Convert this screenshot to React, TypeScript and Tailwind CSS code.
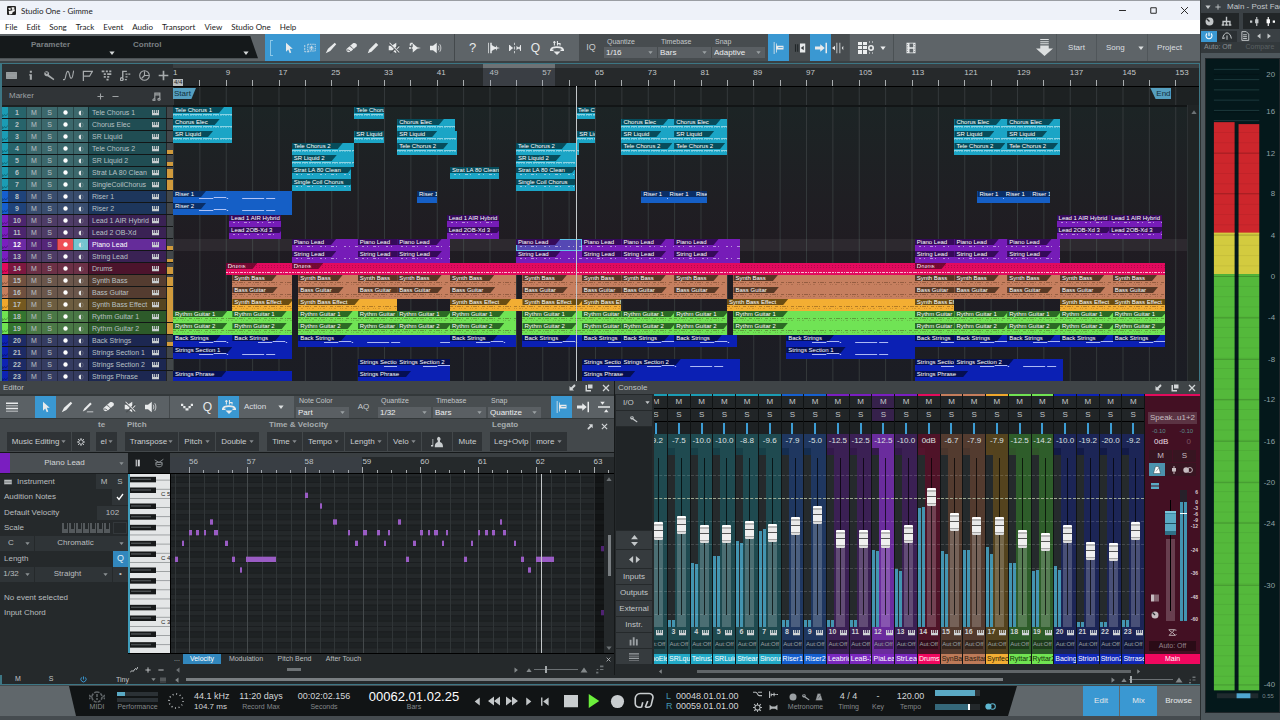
import { ReactNode, useState } from "react";
import clsx from "clsx";

// horizontal zoom of the arrangement and of the piano roll
const BAR = 6.594;
const ROLL_BAR = 57.8;
const SEMI = 16 / 3;

type Hue = "teal" | "blue" | "violet" | "red" | "brown" | "amber" | "green" | "navy";

type Clip = [start: number, end: number];

type Track = {
  n: number;
  name: string;
  clip?: string;
  hue: Hue;
  level?: number;
  notes: "strum" | "sparse" | "dark" | "drums" | "line" | "none";
  clips: Clip[];
};

const hues: Record<
  Hue,
  { strip: string; num: string; btn: string; name: string; body: string; tab: string; desk: string; label: string }
> = {
  teal: {
    strip: "bg-[#1b9cb4]", num: "bg-[#27646b]", btn: "bg-[#3c686c]", name: "bg-[#204d53]",
    body: "bg-[#1ba5c6]", tab: "bg-[#074c5b]", desk: "bg-[#1f4a50]", label: "bg-[#22a9c6] text-white",
  },
  blue: {
    strip: "bg-[#155fcf]", num: "bg-[#1f437a]", btn: "bg-[#394d6e]", name: "bg-[#1d365c]",
    body: "bg-[#155fc6]", tab: "bg-[#0a2e66]", desk: "bg-[#1f3760]", label: "bg-[#155fcf] text-white",
  },
  violet: {
    strip: "bg-[#7a1ec0]", num: "bg-[#4c256f]", btn: "bg-[#4e3c66]", name: "bg-[#3a2254]",
    body: "bg-[#761cb8]", tab: "bg-[#350a5a]", desk: "bg-[#3b2054]", label: "bg-[#7a28bd] text-white",
  },
  red: {
    strip: "bg-[#e30b5c]", num: "bg-[#7c1740]", btn: "bg-[#6b3046]", name: "bg-[#4c142c]",
    body: "bg-[#e20a5e]", tab: "bg-[#720932]", desk: "bg-[#4f1328]", label: "bg-[#f0085f] text-white",
  },
  brown: {
    strip: "bg-[#c57d5c]", num: "bg-[#70503f]", btn: "bg-[#6a564b]", name: "bg-[#543c30]",
    body: "bg-[#c67f5f]", tab: "bg-[#573825]", desk: "bg-[#533b2f]", label: "bg-[#bd7a58] text-[#2a1a10]",
  },
  amber: {
    strip: "bg-[#f0a72c]", num: "bg-[#75591f]", btn: "bg-[#6d5d40]", name: "bg-[#564521]",
    body: "bg-[#f3ae33]", tab: "bg-[#6b4d12]", desk: "bg-[#54431e]", label: "bg-[#f3ae33] text-[#2a1c05]",
  },
  green: {
    strip: "bg-[#70e352]", num: "bg-[#34752f]", btn: "bg-[#4a7846]", name: "bg-[#2d5a2a]",
    body: "bg-[#70e355]", tab: "bg-[#2b6a24]", desk: "bg-[#2e5d2a]", label: "bg-[#70e352] text-[#123008]",
  },
  navy: {
    strip: "bg-[#0d22b4]", num: "bg-[#1d2b66]", btn: "bg-[#353c61]", name: "bg-[#1c2751]",
    body: "bg-[#0b20b4]", tab: "bg-[#050f52]", desk: "bg-[#1c2556]", label: "bg-[#1128b8] text-white",
  },
};

const chorusPair: Clip[] = [[69, 77], [77, 85], [119.5, 127.5], [127.5, 135.5]];
const leads: Clip[] = [[19, 29], [29, 35], [35, 43], [53, 63], [63, 69], [69, 77], [77, 87], [113.5, 119.5], [119.5, 127.5], [127.5, 135.5]];
const airs: Clip[] = [[9.5, 17.4], [42.5, 50.4], [135, 143], [143, 151]];
const ending: Clip[] = [[113.5, 119.5], [119.5, 127.5], [127.5, 135.5], [135.5, 143.5], [143.5, 151.5]];
const groove: Clip[] = [[10, 19], [20, 29], [29, 35], [35, 43], [43, 53], [54, 63], [63, 69], [69, 77], [77, 85], [86, 113.5], ...ending];

const tracks: Track[] = [
  { n: 1, name: "Tele Chorus 1", hue: "teal", notes: "strum", clips: [[1, 10], [28.5, 33], [62.1, 65]] },
  { n: 2, name: "Chorus Elec", hue: "teal", notes: "strum", clips: [[1, 10], [35, 43.7], ...chorusPair] },
  { n: 3, name: "SR Liquid", hue: "teal", notes: "strum", clips: [[1, 10], [28.5, 33], [35, 44], [62.3, 65], ...chorusPair] },
  { n: 4, name: "Tele Chorus 2", hue: "teal", level: 4, notes: "strum", clips: [[19, 28.5], [35, 44], [53, 62.5], ...chorusPair] },
  { n: 5, name: "SR Liquid 2", hue: "teal", level: 4, notes: "strum", clips: [[19, 28.5], [53, 62.1]] },
  { n: 6, name: "Strat LA 80 Clean", hue: "teal", level: 9, notes: "sparse", clips: [[19, 28], [43, 50.4], [53, 62]] },
  { n: 7, name: "SingleCoilChorus", clip: "Single Coil Chorus", hue: "teal", level: 10, notes: "sparse", clips: [[19, 28], [53, 62]] },
  { n: 8, name: "Riser 1", hue: "blue", notes: "line", clips: [[1, 19], [38, 41], [72, 76], [76, 80], [80, 82], [123, 127], [127, 131], [131, 134]] },
  { n: 9, name: "Riser 2", hue: "blue", notes: "line", clips: [[1, 19]] },
  { n: 10, name: "Lead 1 AIR Hybrid", hue: "violet", notes: "sparse", clips: airs },
  { n: 11, name: "Lead 2 OB-Xd", clip: "Lead 2OB-Xd 3", hue: "violet", notes: "sparse", clips: airs },
  { n: 12, name: "Piano Lead", hue: "violet", level: 4, notes: "sparse", clips: leads },
  { n: 13, name: "String Lead", hue: "violet", level: 3, notes: "sparse", clips: leads },
  { n: 14, name: "Drums", hue: "red", level: 7, notes: "drums", clips: [[9, 19], [19, 113.5], [113.5, 151.5]] },
  { n: 15, name: "Synth Bass", hue: "brown", level: 9, notes: "dark", clips: groove },
  { n: 16, name: "Bass Guitar", hue: "brown", level: 11, notes: "dark", clips: groove },
  { n: 17, name: "Synth Bass Effect", hue: "amber", level: 12, notes: "dark", clips: [[10, 19], [20, 35], [43, 54], [54, 63], [63, 69], [85, 113.5], [113.5, 119.5], [135.5, 143.5], [143.5, 151.5]] },
  { n: 18, name: "Rythm Guitar 1", hue: "green", level: 12, notes: "dark", clips: [[1, 10], ...groove] },
  { n: 19, name: "Rythm Guitar 2", hue: "green", level: 11, notes: "dark", clips: [[1, 10], ...groove] },
  { n: 20, name: "Back Strings", hue: "navy", level: 4, notes: "line", clips: [[1, 10], [10, 19], [20, 43], [43, 53], [54, 63], [63, 69], [69, 77], [77, 86.5], [94, 113.5], ...ending] },
  { n: 21, name: "Strings Section 1", hue: "navy", notes: "line", clips: [[1, 19], [94, 113.5]] },
  { n: 22, name: "Strings Section 2", hue: "navy", notes: "line", clips: [[29, 35], [35, 43], [63, 69], [69, 87], [113.5, 119.5], [119.5, 136]] },
  { n: 23, name: "Strings Phrase", hue: "navy", notes: "none", clips: [[1, 19], [29, 43], [63, 87], [113.5, 136]] },
];

// number, name, hue, dB, fader travel, left meter, right meter
const channels: [number, string, Hue, string, number, number, number][] = [
  [2, "ChoEle", "teal", "-9.2", 87, 0, 0],
  [3, "SRLqui", "teal", "-7.5", 93, 7, 7],
  [4, "Telrus2", "teal", "-10.0", 84, 64, 63],
  [5, "SRLuid", "teal", "-10.0", 84, 71, 71],
  [6, "Strlean", "teal", "-8.8", 88, 86, 84],
  [7, "Sinorus", "teal", "-9.6", 85, 96, 98],
  [8, "Riser1", "blue", "-7.9", 92, 7, 7],
  [9, "Riser2", "blue", "-5.0", 103, 7, 7],
  [10, "Leabric", "violet", "-12.5", 79, 7, 7],
  [11, "LeaB-X", "violet", "-12.5", 79, 7, 7],
  [12, "PiaLea", "violet", "-12.5", 79, 77, 76],
  [13, "StrLead", "violet", "-10.0", 84, 58, 56],
  [14, "Drums", "red", "0dB", 121, 119, 120],
  [15, "SynBas", "brown", "-6.7", 96, 76, 73],
  [16, "Basitar", "brown", "-7.9", 92, 77, 77],
  [17, "Synfec", "amber", "-7.9", 92, 80, 73],
  [18, "Ryttar1", "green", "-12.5", 79, 64, 64],
  [19, "Ryttar2", "green", "-14.2", 76, 56, 57],
  [20, "Bacing", "navy", "-10.0", 84, 61, 57],
  [21, "Strion1", "navy", "-19.2", 67, 5, 5],
  [22, "Strion2", "navy", "-20.0", 66, 5, 5],
  [23, "Strrase", "navy", "-9.2", 87, 7, 7],
];

// piano roll notes: x, width, semitones below the top key
const rollNotes: [number, number, number][] = [
  [4, 3, 16], [11, 2, 13], [18, 3, 11], [25, 3, 11], [33, 2, 11], [39, 3, 9], [43, 4, 11], [54, 3, 13], [61, 3, 16], [69, 2, 18],
  [75, 30, 16], [134, 3, 4], [149, 2, 6], [162, 4, 9], [177, 2, 11], [184, 3, 13], [192, 4, 11], [206, 3, 11], [213, 2, 13],
  [217, 2, 11], [227, 3, 9], [235, 3, 16], [242, 3, 13], [249, 3, 11], [257, 2, 11], [263, 4, 11], [271, 2, 13], [275, 2, 11],
  [293, 3, 16], [300, 2, 13], [307, 2, 11], [314, 3, 11], [321, 3, 11], [329, 2, 9], [332, 3, 11], [343, 2, 13], [350, 3, 16],
  [357, 3, 18], [365, 18, 16],
];
const blackKeys = [1, 3, 6, 8, 10, 13, 15, 18, 20, 22, 25, 27, 30, 32];

const icons: Record<string, ReactNode> = {
  pointer: <path d="M4 1v12l3-3 2 5 2-1-2-5h4z" fill="currentColor" />,
  range: (
    <>
      <rect x="5" y="3" width="10" height="9" fill="none" stroke="currentColor" strokeDasharray="2 1" />
      <path d="M1 4v9h7M8 6l4 4M12 6l-4 4M10 5v6M7 8h6" fill="none" stroke="currentColor" strokeDasharray="3 1" />
    </>
  ),
  brush: <path d="M1 15l3-6 9-8 2 2-8 9zM4 9l3 3" fill="currentColor" />,
  line: <path d="M1 15l2-5 9-9 3 3-9 9z" fill="currentColor" />,
  pencilLine: <path d="M1 14l2-4 8-8 2 2-8 8zM6 15h9v-1H7z" fill="currentColor" />,
  eraser: (
    <>
      <path d="M1 9l8-7c3-2 7 1 5 4l-8 7c-3 2-7-1-5-4z" fill="currentColor" />
      <path d="M5 6c2 0 4 2 5 4M1 11c2-1 4 0 5 2" fill="none" stroke="#3d4245" />
    </>
  ),
  mute: (
    <>
      <path d="M1 5h4l6-4v14l-6-4H1z" fill="currentColor" />
      <path d="M1 1l14 14M15 4L3 15" stroke="#4b5053" strokeWidth="2" />
      <path d="M2 1l13 13M15 6l-3 3" stroke="currentColor" strokeWidth="1.4" />
    </>
  ),
  bend: (
    <>
      <path d="M5 2l6 5 5 1-5 1-6 5z" fill="currentColor" />
      <path d="M0 8h7M2 2h3M2 2v3" stroke="currentColor" strokeWidth="2" strokeDasharray="3 1" />
    </>
  ),
  speaker: (
    <>
      <path d="M0 5h4l5-4v14l-5-4H0z" fill="currentColor" />
      <path d="M11 5c1 2 1 4 0 6M13 3c2 3 2 7 0 10" fill="none" stroke="currentColor" />
    </>
  ),
  transient: <path d="M0 1h1v14H0zM3 1h2v3l3 2 3 1V5h1v2l4 1-4 1v2h-1V9l-3 1-3 2v3H3z" fill="currentColor" />,
  gate: <path d="M0 4h1l3 3 2 1-2 1-3 3H0zM7 1h1v3H7zm0 5h1v4H7zm0 6h1v3H7zM10 5l2 2h2l1-3h1v8h-1l-1-3h-2l-2 2z" fill="currentColor" />,
  stretch: (
    <>
      <path d="M4 12h8l-4 4z" fill="currentColor" />
      <path d="M1 10c1-4 13-4 14 0M0 10.500h4M12 10.500h4" fill="none" stroke="currentColor" strokeWidth="1.800" />
      <path d="M5 0v5M3.500 1.500h3M8.500 0v5M8.500 3h3v2" fill="none" stroke="currentColor" strokeWidth="1.200" />
    </>
  ),
  snap: <path d="M1 0h1v16H1zM4 2h1v12H4zM5 5h9v5H5zM7 7v1h6V7z" fill="currentColor" fillRule="evenodd" />,
  loopIn: (
    <>
      <path d="M8 2h7v12H8z" fill="currentColor" />
      <path d="M13 5v6L9 8z" fill="#3a3f42" />
      <path d="M2 3v10M5 3v10" stroke="#1f2426" strokeWidth="1.5" />
    </>
  ),
  autoscroll: <path d="M0 6h7V3l6 5-6 5v-3H0zM14 1h2v14h-2z" fill="currentColor" />,
  cursor: <path d="M0 8l4-3v6zM6 1h1v14H6zM10 1h1v14h-1zM15 5v6l-2-3z" fill="currentColor" />,
  grid: (
    <>
      <path d="M0 2h4v3H0zM5 2h4v3H5zM0 6h4v3H0zM5 6h4v3H5zM0 10h4v4H0zM5 10h4v4H5z" fill="currentColor" />
      <circle cx="13" cy="8" r="2.2" fill="none" stroke="currentColor" strokeWidth="1.6" />
      <path d="M11 2h1M14 2h1M11 13h1M14 13h1" stroke="currentColor" />
    </>
  ),
  film: <path d="M2 1h12v14H2zM6 2v5h5V2zM6 9v5h5V9zM3 3v1h1V3zM3 6v1h1V6zM3 9v1h1V9zM3 12v1h1v-1zM12 3v1h1V3zM12 6v1h1V6zM12 9v1h1V9zM12 12v1h1v-1z" fill="currentColor" fillRule="evenodd" />,
  drop: <path d="M4 0h8v1H4zM4 2h8v1H4zM4 4h8v1H4zM4 6h8v3h4l-8 7-8-7h4z" fill="currentColor" />,
  block: <path d="M0 3h16v10H0zM1 5h14M1 7h14M1 9h14M1 11h14" fill="currentColor" stroke="#3a3f42" strokeWidth=".3" />,
  info: <path d="M7 1h3v3H7zM6 6h4v8H7V8H6z" fill="currentColor" />,
  wrench: <path d="M1 3c3-3 8 0 6 4l8 6-1 2-9-6C2 10-1 7 1 3l3 3 2-2z" fill="currentColor" />,
  automation: <path d="M0 14h2C4 14 4 2 7 2s2 10 5 10 2-9 4-11" fill="none" stroke="currentColor" strokeWidth="1.6" />,
  flag: <path d="M2 16V2h13l-4 7H3" fill="none" stroke="currentColor" strokeWidth="1.8" />,
  tempo: <path d="M1 2h4M7 2h3M12 2h3M4 6h3M9 6h6M4 10h3M9 10h3M8 14h3" stroke="currentColor" strokeWidth="2.4" />,
  size: <path d="M9 1h6v3H9zM9 7h6v2H9zM3 7h3v2H3zM2 12h4v3H2z" fill="currentColor" />,
  chord: <path d="M4 1v10M4 2h6M4 12a2 2 0 1 1-3 0 2 2 0 0 1 3 0M8 6h3M12 6h3M8 10h3M7 14h3" fill="none" stroke="currentColor" strokeWidth="2" />,
  clock: <path d="M8 1a7 7 0 1 0 0 14A7 7 0 0 0 8 1zM8 2v6h6M8 8l-4 4" fill="none" stroke="currentColor" strokeWidth="1.6" />,
  plus: <path d="M8 1v14M1 8h14" stroke="currentColor" strokeWidth="2.4" />,
  minus: <path d="M1 8h14" stroke="currentColor" strokeWidth="2.4" />,
  notes: <path d="M5 13V2h9v10M5 5h9M5 13a2 1.6 0 1 1-3 0 2 1.6 0 0 1 3 0M14 12a2 1.6 0 1 1-3 0 2 1.6 0 0 1 3 0" fill="none" stroke="currentColor" strokeWidth="2" />,
  keys: <path d="M0 2h3v7h2V2h2v7h2V2h2v7h2V2h3v12H0z" fill="currentColor" />,
  menu: <path d="M0 2h16v2H0zM0 6h16v1H0zM0 9h16v2H0zM0 13h16v1H0z" fill="currentColor" />,
  wave: <path d="M0 5h3M3 8h3M6 11h4M10 8h3M13 5h3" stroke="currentColor" strokeWidth="3" />,
  gear: <path d="M8 3.5a4.500 4.500 0 1 0 0 9 4.500 4.500 0 0 0 0-9zM8 0v4M8 12v4M0 8h4M12 8h4M2 2l3 3M11 11l3 3M14 2l-3 3M5 11l-3 3" fill="none" stroke="currentColor" strokeWidth="1.8" />,
  dock: <path d="M14 1l1 3-6 6 3 3H3V4l3 3 6-6z" fill="currentColor" />,
  undock: <path d="M2 15l-1-3 6-6-3-3h9v9l-3-3-6 6z" fill="currentColor" />,
  windows: <path d="M1 2h3v10h8v3H1zM6 1h9v8H6z" fill="currentColor" />,
  close: <path d="M2 2l12 12M14 2L2 14" stroke="currentColor" strokeWidth="2.600" />,
  upDown: <path d="M8 0l5 6H3zM8 16l5-6H3z" fill="currentColor" />,
  leftRight: <path d="M0 8l6-5v10zM16 8l-6-5v10z" fill="currentColor" />,
  bars: <path d="M1 6h3v9H1zM6 2h3v13H6zM11 5h3v10h-3z" fill="currentColor" />,
  mono: <path d="M0 1h7v14H0zM9 1h2v14H9zM12 1h1v14h-1zM15 1h1v14h-1z" fill="currentColor" />,
  split: <path d="M0 7h16v2H0zM3 1h6L6 5zM8 15h6l-3-4z" fill="currentColor" />,
  power: <path d="M8 1v7M4 3a6 6 0 1 0 8 0" fill="none" stroke="currentColor" strokeWidth="2.2" />,
  figure: <path d="M10 1a3 3 0 0 1 2 5v2c3 1 4 3 4 7H5c0-4 1-6 4-7V6a3 3 0 0 1 1-5zM0 14v-2h2V4h1v10z" fill="currentColor" />,
  zigzag: <path d="M0 13l4-4 2 2 5-6 2 2 3-5" fill="none" stroke="currentColor" strokeWidth="2" />,
  knob: (
    <>
      <circle cx="8" cy="8" r="7" fill="currentColor" />
      <path d="M8 8l-5-5" stroke="#2a2e30" strokeWidth="2.500" />
    </>
  ),
  routing: <path d="M8 1v7M3 13V8h10v5M1 13h4M11 13h4M6 13h4M8 8v5" stroke="currentColor" strokeWidth="2" fill="none" />,
  faderDot: <path d="M0 6h4v4H0zM11 0h2v16h-2zM9 4h6v7H9z" fill="currentColor" />,
  dotFader: <path d="M12 6h4v4h-4zM3 0h2v16H3zM1 4h6v7H1z" fill="currentColor" />,
  fader: <path d="M7 0h2v16H7zM4 4h8v7H4z" fill="currentColor" />,
  bypass: <path d="M1 12c2-12 12-12 14 0M8 14V7M1 12l4-1" fill="none" stroke="currentColor" strokeWidth="1.6" />,
  doc: <path d="M3 1h7l4 4v10H3zM5 6h6M5 9h6M5 12h6" fill="none" stroke="currentColor" strokeWidth="1.500" />,
  link: (
    <>
      <circle cx="5" cy="8" r="4.500" fill="currentColor" />
      <circle cx="11" cy="8" r="4" fill="none" stroke="currentColor" strokeWidth="1.500" />
    </>
  ),
  metronome: <path d="M5 1h6l4 14H1zM6 11l6-8" fill="currentColor" stroke="#111" strokeWidth=".7" />,
  fade: <path d="M0 4h5c3 0 3 6 6 6h5M9 4h7" fill="none" stroke="currentColor" strokeWidth="2" />,
  punch: <path d="M1 2v12M4 6v5M5 8h7M9 5v6M13 8h3" stroke="currentColor" strokeWidth="2" />,
  squeeze: <path d="M1 3l4 3h6l4-3v10l-4-3H5l-4 3z" fill="currentColor" />,
  circle: <circle cx="8" cy="8" r="7" fill="currentColor" />,
  midi: <path d="M8 3a5 5 0 1 0 0 10A5 5 0 0 0 8 3zM0 6l2 2-2 2M16 6l-2 2 2 2M8 5v6" fill="none" stroke="currentColor" strokeWidth="1.600" strokeDasharray="3 1" />,
  half: (
    <>
      <circle cx="8" cy="8" r="6" fill="none" stroke="currentColor" opacity=".5" />
      <path d="M8 2a6 6 0 0 0 0 12z" fill="currentColor" />
    </>
  ),
  loop: <path d="M6 13H4a3 3 0 0 1-3-3V6a4 4 0 0 1 4-4h7a3 3 0 0 1 3 4l-1 4a3 3 0 0 1-3 3H9M9 13l2-5M6 13l1-4" fill="none" stroke="currentColor" strokeWidth="1.300" />,
  rewind: <path d="M8 2v12L0 8zM16 2v12L8 8z" fill="currentColor" />,
  forward: <path d="M0 2l8 6-8 6zM8 2l8 6-8 6z" fill="currentColor" />,
  toStart: <path d="M3 2h2v12H3zM14 2v12L6 8z" fill="currentColor" />,
  left: <path d="M12 1v14L3 8z" fill="currentColor" />,
  right: <path d="M4 1v14l9-7z" fill="currentColor" />,
  play: <path d="M2 0v16l12-8z" fill="currentColor" />,
  up: <path d="M1 13h14L8 3z" fill="currentColor" />,
  down: <path d="M1 4h14l-7 9z" fill="currentColor" />,
  stop: <path d="M0 1h16v14H0z" fill="currentColor" />,
  lane: <path d="M1 6v7M2 11c3 2 3-7 6-3s4 1 7-4" fill="none" stroke="currentColor" strokeWidth="1.600" />,
  drumkit: <path d="M1 3l7 4 7-5M3 7h10v5c-2 3-8 3-10 0zM3 9c2 2 8 2 10 0" fill="none" stroke="currentColor" strokeWidth="1.500" />,
  key: <path d="M3 1h3v14H3zM7 1h5v14H7z" fill="currentColor" stroke="#1a1d1f" strokeWidth=".8" />,
  stack: <path d="M0 2h16v5H0zM0 9h16v5H0z" fill="currentColor" />,
  sigma: <path d="M1 3h10l-3 5 5 5H2l5-5-5-4M11 3l4 1M13 13l2-2" fill="none" stroke="currentColor" strokeWidth="1.600" />,
  keyboard: <path d="M0 3h16v10H0zM1 8h14" fill="currentColor" stroke="#2a2e30" />,
};

function Icon({ name, className = "size-3" }: { name: string; className?: string }) {
  return (
    <svg viewBox="0 0 16 16" aria-hidden="true" className={clsx("shrink-0", className)}>
      {icons[name]}
    </svg>
  );
}

function Tool({ icon, label, on, className = "w-[21px]" }: { icon: string; label: string; on?: boolean; className?: string }) {
  return (
    <button
      type="button"
      aria-label={label}
      className={clsx("flex h-full shrink-0 items-center justify-center text-[#e8eaeb]", on && "bg-[#3a98d2]", className)}
    >
      <Icon name={icon} className={icon === "stretch" ? "size-[14px]" : "size-3"} />
    </button>
  );
}

function Picker({ label, options, className = "w-[53px]" }: { label: string; options: string[]; className?: string }) {
  return (
    <label className={clsx("flex shrink-0 flex-col justify-between text-[7px] leading-[9px] text-[#c3c7c9]", className)}>
      <span className="pl-[3px]">{label}</span>
      <span className="relative flex h-[11px] items-center bg-[#5a5f63]">
        <select className="h-full w-full appearance-none bg-transparent pl-[2px] text-[8px] leading-[10px] text-[#eceeef]">
          {options.map((o) => (
            <option key={o}>{o}</option>
          ))}
        </select>
        <Icon name="down" className="absolute right-1 size-[5px] text-[#9ba0a3]" />
      </span>
    </label>
  );
}

function CellSelect({ label, options, className }: { label: string; options: string[]; className?: string }) {
  return (
    <span className={clsx("relative flex h-full items-center bg-[#2f3437]", className)}>
      <select aria-label={label} className="w-full appearance-none bg-transparent pr-3 text-[8px] [text-align-last:center]">
        {options.map((o) => (
          <option key={o}>{o}</option>
        ))}
      </select>
      <Icon name="down" className="absolute right-1 size-[5px] text-[#8b9093]" />
    </span>
  );
}

function MenuButton({ children, className, arrow = true }: { children: ReactNode; className?: string; arrow?: boolean }) {
  return (
    <button type="button" className={clsx("flex h-[19px] shrink-0 items-center justify-around bg-[#2f3336] px-1 text-[8px] text-[#c9cdcf]", className)}>
      {children}
      {arrow && <Icon name="down" className="size-[5px] text-[#85898c]" />}
    </button>
  );
}

function ZoomSlider({ label, value }: { label: string; value: number }) {
  return (
    <span className="flex items-center gap-[2px] text-[#83888a]">
      <Icon name="up" className="size-[6px]" />
      <input
        type="range"
        aria-label={label}
        defaultValue={value}
        className="h-2 w-[44px] appearance-none bg-transparent [&::-webkit-slider-runnable-track]:h-px [&::-webkit-slider-runnable-track]:bg-[#6b7073] [&::-webkit-slider-thumb]:-mt-[3px] [&::-webkit-slider-thumb]:h-[7px] [&::-webkit-slider-thumb]:w-[2px] [&::-webkit-slider-thumb]:appearance-none [&::-webkit-slider-thumb]:bg-[#a3a8aa]"
      />
      <Icon name="up" className="size-2" />
    </span>
  );
}

function TitleBar() {
  return (
    <header className="font-[Lato,sans-serif] text-[8px] text-[#1c1c1c]">
      <div className="flex h-5 items-center border-t border-[#9a9ea3] bg-[#eef2f9] pl-[7px]">
        <svg viewBox="0 0 16 16" className="size-[9px]" aria-hidden="true">
          <rect width="16" height="16" rx="2" fill="#222" />
          <path d="M2 4l4-1 1 3-3 1zM8 2h5v3l-4 2zM3 9l6-1 4-3 1 4-4 2-1 3-5 1z" fill="#eee" />
        </svg>
        <h1 className="ml-[5px]">Studio One - Gimme</h1>
        <div className="ml-auto flex h-full text-[#222]">
          {["M3 8h10", "M4 4h8v8H4z", "M3 3l10 10M13 3L3 13"].map((d, i) => (
            <button key={d} type="button" aria-label={["Minimize", "Maximize", "Close"][i]} className="flex w-[31px] items-center justify-center">
              <svg viewBox="0 0 16 16" className="size-[11px]" aria-hidden="true">
                <path d={d} fill="none" stroke="currentColor" strokeWidth="1.400" />
              </svg>
            </button>
          ))}
        </div>
      </div>
      <nav className="flex h-[14px] items-center gap-[9px] bg-white pl-[5px]">
        {["File", "Edit", "Song", "Track", "Event", "Audio", "Transport", "View", "Studio One", "Help"].map((m) => (
          <button key={m} type="button">{m}</button>
        ))}
      </nav>
    </header>
  );
}

function MainToolbar() {
  return (
    <div className="flex h-[27px] shrink-0 bg-[#5e6468]">
      <div className="flex w-[258px] shrink-0 bg-[#15191b] text-[8px] font-bold text-[#7b8083] [clip-path:polygon(0_7%,97%_7%,100%_90%,0_90%)]">
        <button type="button" className="flex w-[120px] items-start justify-between pt-[5px] pl-[31px]">
          Parameter
          <Icon name="down" className="mt-[11px] mr-[5px] size-[6px] text-[#d5d8d9]" />
        </button>
        <button type="button" className="flex w-[134px] items-start justify-between pt-[5px] pl-[13px]">
          Control
          <Icon name="down" className="mt-[11px] mr-[5px] size-[6px] text-[#d5d8d9]" />
        </button>
      </div>
      <div className="ml-[7px] flex w-[190px] shrink-0 border-r border-[#44494c]">
        <span className="flex w-[13px] items-center justify-center bg-[#3a98d2]">
          <i className="h-4 w-[3px] border-y border-l border-[#8cc8e8]" />
        </span>
        <Tool icon="pointer" label="Arrow tool" on />
        <Tool icon="range" label="Range tool" on />
        <Tool icon="brush" label="Paint tool" />
        <Tool icon="eraser" label="Eraser tool" />
        <Tool icon="line" label="Split tool" />
        <Tool icon="mute" label="Mute tool" />
        <Tool icon="bend" label="Bend tool" />
        <Tool icon="speaker" label="Listen tool" />
      </div>
      <div className="flex w-[124px] shrink-0 items-center pl-[7px] text-[#e8eaeb]">
        <button type="button" className="w-[21px] text-[13px]">?</button>
        <Tool icon="transient" label="Transient detection" />
        <Tool icon="gate" label="Strip silence" />
        <button type="button" className="w-[21px] text-[12px]">Q</button>
        <Tool icon="stretch" label="Time stretch" />
      </div>
      <div className="flex shrink-0 gap-px bg-[#474c4f] py-[3px] pr-[3px]">
        <button type="button" className="w-6 text-[9px] text-[#c7cbcd]">IQ</button>
        <Picker label="Quantize" options={["1/16"]} />
        <Picker label="Timebase" options={["Bars"]} />
        <Picker label="Snap" options={["Adaptive"]} />
      </div>
      <div className="flex shrink-0 bg-[#474c4f] pr-1">
        <Tool icon="snap" label="Snap" on />
        <Tool icon="loopIn" label="Ripple edit" />
        <Tool icon="autoscroll" label="Autoscroll" on />
        <Tool icon="cursor" label="Cursor follows" className="w-[14px]" />
      </div>
      <button type="button" aria-label="Grid options" className="flex w-[45px] shrink-0 items-center justify-center gap-[6px] border-x border-[#4b5154] text-[#eceeef]">
        <Icon name="grid" className="size-4" />
        <Icon name="down" className="size-[6px]" />
      </button>
      <Tool icon="film" label="Video player" className="w-[34px]" />
      <div className="ml-auto flex items-center text-[8px] text-[#dcdfe0]">
        <button type="button" aria-label="Install" className="flex h-full w-6 items-center justify-center">
          <Icon name="drop" className="size-[17px]" />
        </button>
        <button type="button" className="h-full w-10 border-l border-[#50565a]">Start</button>
        <button type="button" className="flex h-full w-[51px] items-center justify-between border-l border-[#50565a] pr-[3px] pl-[9px]">
          Song <Icon name="down" className="size-[6px]" />
        </button>
        <button type="button" className="h-full w-[53px] border-l border-[#50565a] pr-[9px]">Project</button>
      </div>
    </div>
  );
}

function TrackHeader({ t, selected, onSelect }: { t: Track; selected: boolean; onSelect: () => void }) {
  const h = hues[t.hue];
  const btn = clsx("flex items-center justify-center border-l border-black/30", selected ? "bg-[#552678]" : h.btn);
  return (
    <li className="flex h-3 border-b border-black/35 text-[7px] leading-[11px] text-[#b9c1c4]">
      <span className={clsx("flex w-[6px] items-end", h.strip)}>
        <Icon name="lane" className="size-[6px] text-black/50" />
      </span>
      <span className={clsx("w-[18px] text-center font-bold", selected ? "bg-[#6c2aa4] text-white" : h.num)}>{t.n}</span>
      <button type="button" className={clsx("w-[15px]", btn)}>M</button>
      <button type="button" className={clsx("w-4", btn)}>S</button>
      <button type="button" aria-label={`Record ${t.name}`} className={clsx("w-4", btn, selected && "!bg-[#ee4f55]")}>
        <Icon name="circle" className="size-[5px] text-white" />
      </button>
      <button type="button" aria-label={`Monitor ${t.name}`} className={clsx("w-[15px]", btn, selected && "!bg-[#74c4d0]")}>
        <Icon name="half" className="size-[6px] text-[#e3e6e7]" />
      </button>
      <button
        type="button"
        onClick={onSelect}
        className={clsx(
          "flex min-w-0 flex-1 items-center justify-between border-l border-black/40 pr-[7px] pl-[3px] whitespace-nowrap",
          selected ? "bg-[#652c9a] text-white" : h.name
        )}
      >
        {t.name}
        <Icon name="keys" className="size-[7px] text-[#c9ced0]" />
      </button>
      <span className="flex w-[7px] items-end border-l border-black/50 bg-[#42474a]">
        {t.level ? <i className="w-full bg-[#d09a3c]" style={{ height: t.level }} /> : null}
      </span>
    </li>
  );
}

function ClipNotes({ kind }: { kind: Track["notes"] }) {
  if (kind === "none") return null;
  return (
    <svg className="absolute inset-0 size-full" aria-hidden="true">
      {kind === "strum" && (
        <>
          <path d="M0 7.500h900" stroke="#d5f3f8" strokeDasharray="9 1 6 1 12 1" opacity=".6" />
          <path d="M0 8.500h900" stroke="#bfeaf2" strokeDasharray="1 1 2 1" opacity=".35" />
        </>
      )}
      {kind === "sparse" && <path d="M4 7.500h900" stroke="#e6dcf5" strokeDasharray="2 3 1 5 3 2 1 7" opacity=".6" />}
      {kind === "dark" && (
        <>
          <path d="M0 7.500h900" stroke="#3b1f0c" strokeDasharray="3 2 1 1 4 1 1 3" opacity=".35" />
          <path d="M0 9.500h900" stroke="#3b1f0c" strokeDasharray="1 2 2 4 1 1" opacity=".18" />
        </>
      )}
      {kind === "drums" && (
        <>
          <path d="M0 2.500h900M0 4.500h900" stroke="#8a0838" strokeDasharray="1 2" opacity=".5" />
          <path d="M0 9.500h900" stroke="#ffd4e2" strokeDasharray="2 1 1 1 3 1" opacity=".85" />
        </>
      )}
      {kind === "line" && <path d="M26 7.500h14l1-1h12l1 1h900" fill="none" stroke="#c9d4ff" strokeDasharray="30 14 22 2 9 40" opacity=".85" />}
    </svg>
  );
}

function Lane({ t, selected }: { t: Track; selected: boolean }) {
  const h = hues[t.hue];
  return (
    <li className={clsx("relative h-3", selected && "bg-white/[.06]")}>
      {t.clips.map(([from, to]) => {
        const active = selected && from === 53;
        return (
          <div
            key={from}
            className={clsx("absolute top-0 h-3 overflow-hidden", active ? "bg-[#5548b4] outline -outline-offset-1 outline-[#5fc4e8]" : h.body)}
            style={{ left: (from - 1) * BAR, width: (to - from) * BAR }}
          >
            <span
              className={clsx(
                "block h-[6px] w-max pr-3 pl-[2px] text-[6px] leading-[6px] whitespace-nowrap text-white [clip-path:polygon(0_0,100%_0,calc(100%_-_5px)_100%,0_100%)]",
                h.tab
              )}
            >
              {t.clip ?? t.name}
            </span>
            <ClipNotes kind={t.notes} />
          </div>
        );
      })}
    </li>
  );
}

function Arrangement() {
  const [selected, setSelected] = useState(12);
  const marks = Array.from({ length: 20 }, (_, i) => 1 + i * 8);
  const gridStyle = {
    backgroundImage: "linear-gradient(to right, #33383a 1px, transparent 1px)",
    backgroundSize: `${4 * BAR}px 100%`,
  };
  return (
    <section aria-label="Arrangement" className="mt-[2px] flex min-h-0 flex-1 border-t border-r border-l-2 border-[#3d7684] bg-[#1d2122]">
      <div className="flex w-[171px] shrink-0 flex-col">
        <div className="flex h-[22px] shrink-0 items-center bg-[#2c3033] text-[#a7abad]">
          {["block", "info", "wrench", "automation", "flag", "tempo", "chord", "clock", "plus"].map((n) => (
            <button key={n} type="button" aria-label={n} className="flex flex-1 justify-center">
              <Icon name={n} className="size-[11px]" />
            </button>
          ))}
        </div>
        <div className="flex h-[19px] shrink-0 items-center border-t border-black bg-[#303437] pr-3 pl-[7px] text-[8px] text-[#9ea2a4]">
          Marker
          <Icon name="plus" className="ml-auto size-[7px]" />
          <Icon name="minus" className="ml-2 size-[7px]" />
          <Icon name="notes" className="ml-[33px] size-[9px]" />
        </div>
        <ul className="mt-[2px] min-h-0 flex-1 overflow-hidden">
          {tracks.map((t) => (
            <TrackHeader key={t.n} t={t} selected={t.n === selected} onSelect={() => setSelected(t.n)} />
          ))}
        </ul>
      </div>

      <div className="relative flex min-w-0 flex-1 flex-col overflow-hidden">
        <div className="relative flex h-[22px] shrink-0 border-t-4 border-[#3a3f42] bg-[#26292b]">
          {marks.map((m) => (
            <div key={m} className="flex shrink-0 flex-col justify-between" style={{ width: 8 * BAR }}>
              <span className="text-[8px] leading-[9px] text-[#c3c7c9]">{m}</span>
              <span className="flex h-[6px]">
                <i className="w-1/2 border-l border-[#a9adaf]" />
                <i className="w-1/2 border-l border-[#a9adaf]" />
              </span>
            </div>
          ))}
          <div
            className="absolute -top-1 h-[22px] border-t-4 border-[#6d7275] bg-[#8a94a8]/20"
            style={{ left: 47 * BAR, width: 11 * BAR }}
          />
          <span className="absolute bottom-0 left-0 bg-[#b9bdbf] px-px text-[6px] leading-[7px] text-[#222]">4/4</span>
        </div>
        <div className="flex h-[19px] shrink-0 items-start border-t border-black pt-[1px] text-[8px] leading-[11px] text-[#12303c]" style={gridStyle}>
          <span className="w-[23px] bg-[#559fc0] pl-px [clip-path:polygon(0_0,100%_0,80%_100%,0_100%)]">Start</span>
          <span className="w-[21px] bg-[#559fc0] pl-[6px] [clip-path:polygon(0_0,100%_0,100%_100%,25%_100%)]" style={{ marginLeft: 151.4 * BAR - 44 }}>
            End
          </span>
        </div>
        <ul className="min-h-0 flex-1 overflow-hidden border-t-2 border-[#121516] bg-gradient-to-b from-[#1c2425] via-[#201c22] to-[#1b1d24]">
          <div style={gridStyle}>
            {tracks.map((t) => (
              <Lane key={t.n} t={t} selected={t.n === selected} />
            ))}
          </div>
        </ul>
        <i className="absolute top-[22px] bottom-0 w-px bg-[#c4c8ca]" style={{ left: 61.15 * BAR }} />
        <div className="absolute top-[41px] right-0 bottom-0 flex w-3 justify-center border-l border-[#2c3133] bg-[#202425] pt-1">
          <Icon name="up" className="size-[6px] text-[#6d7275]" />
        </div>
      </div>
    </section>
  );
}

function PaneTitle({ children }: { children: ReactNode }) {
  return (
    <div className="flex h-[13px] shrink-0 items-center bg-[#3f4447] px-[3px] text-[8px] text-[#bfc3c5]">
      {children}
      <div className="ml-auto flex gap-[9px] pr-px text-[#d3d6d8]">
        {["dock", "windows", "close"].map((n) => (
          <button key={n} type="button" aria-label={n}>
            <Icon name={n} className="size-2" />
          </button>
        ))}
      </div>
    </div>
  );
}

function Group({ title, children, className }: { title: string; children: ReactNode; className?: string }) {
  return (
    <div className={clsx("flex shrink-0 flex-col justify-between", className)}>
      <h3 className="pl-[2px] text-[8px] leading-[10px] font-bold text-[#a7acae]">{title}</h3>
      <div className="flex gap-px">{children}</div>
    </div>
  );
}

function EditorInspector() {
  return (
    <aside className="flex w-[128px] shrink-0 flex-col bg-[#25292b] text-[8px] text-[#b9bdbf]">
      <h2 className="flex h-[21px] shrink-0 items-center border-b border-[#1a1d1f] bg-[#4a4f53] text-[#d3d6d8]">
        <i className="h-full w-[10px] bg-[#7a1ec0]" />
        <span className="flex-1 text-center font-normal">Piano Lead</span>
        <Icon name="down" className="mr-1 size-[5px] text-[#8b9093]" />
      </h2>
      <div className="flex h-[108px] flex-col">
        <div className="flex flex-1 items-center pl-1">
          <Icon name="keyboard" className="mr-[5px] size-2" />
          Instrument
          <button type="button" className="ml-auto h-full w-4 bg-[#2f3437]">M</button>
          <button type="button" className="h-full w-4 bg-[#2f3437]">S</button>
        </div>
        <div className="flex flex-1 items-center pl-1">
          <label htmlFor="audition" className="flex-1">Audition Notes</label>
          <span className="relative flex h-full w-4 items-center justify-center bg-[#2f3437]">
            <input id="audition" type="checkbox" defaultChecked className="peer size-full appearance-none" />
            <svg viewBox="0 0 16 16" aria-hidden="true" className="pointer-events-none absolute hidden size-2 text-white peer-checked:block">
              <path d="M2 8l4 5 8-11" fill="none" stroke="currentColor" strokeWidth="2.600" />
            </svg>
          </span>
        </div>
        <div className="flex flex-1 items-center pl-1">
          <label htmlFor="velocity" className="flex-1">Default Velocity</label>
          <input id="velocity" defaultValue="102" className="h-[14px] w-[31px] bg-[#2f3437] text-center" />
        </div>
        <div className="flex flex-1 items-center pl-1">
          <label htmlFor="scale" className="flex-1">Scale</label>
          <svg viewBox="0 0 48 10" aria-hidden="true" className="mr-[3px] h-[10px] w-12">
            {[0, 1, 2, 3, 4, 5, 6].map((i) => (
              <g key={i}>
                <rect x={i * 7} width="6" height="10" fill="#54595c" />
                <rect x={i * 7 + 2} width="3" height="6" fill="#24282a" />
              </g>
            ))}
          </svg>
          <input id="scale" type="checkbox" className="mr-px h-3 w-[14px] appearance-none border border-[#33383b]" />
        </div>
        <div className="flex flex-1 gap-px">
          <CellSelect label="Root" options={["C"]} className="w-[34px]" />
          <CellSelect label="Scale type" options={["Chromatic"]} className="flex-1" />
        </div>
        <div className="flex flex-1 items-center pl-1">
          Length
          <button type="button" className="ml-auto h-full w-[15px] bg-[#3287bd] text-[9px] text-[#dcecf5]">Q</button>
        </div>
        <div className="flex flex-1 gap-px">
          <CellSelect label="Note length" options={["1/32"]} className="w-[34px]" />
          <CellSelect label="Note type" options={["Straight"]} className="flex-1" />
          <button type="button" className="w-[15px] bg-[#2f3437]">•</button>
        </div>
      </div>
      <p className="mt-2 h-[15px] pl-1 leading-[15px]">No event selected</p>
      <p className="h-[15px] pl-1 leading-[15px]">Input Chord</p>
    </aside>
  );
}

function PianoRoll() {
  return (
    <div className="flex min-h-0 flex-1">
      <svg viewBox="0 0 42 179" className="h-[179px] w-[42px] shrink-0 bg-[#e4e6e7]" aria-label="Keyboard">
        <rect width="2" height="179" fill="#3f9cba" />
        {Array.from({ length: 20 }, (_, i) => (
          <rect key={i} x="2" y={5.7 + i * 9.143} width="40" height=".8" fill="#8d9193" />
        ))}
        {blackKeys.map((k) => (
          <g key={k}>
            <rect x="2" y={k * SEMI - 2.5} width="26" height="5.500" fill="#17191a" />
            <rect x="3" y={k * SEMI - 0.8} width="20" height="1.500" fill="#4a4e50" />
          </g>
        ))}
        {[5, 4, 3].map((o, i) => (
          <text key={o} x="33" y={22 + i * 64} fontSize="6" fill="#222" fontFamily="Liberation Sans, sans-serif">
            C {o}
          </text>
        ))}
      </svg>
      <div className="relative min-w-0 flex-1 overflow-hidden border-l border-black bg-[#24282a]">
        <svg className="h-[179px] w-full" aria-label="Notes">
          {blackKeys.map((k) => (
            <rect key={k} y={k * SEMI - SEMI / 2} width="100%" height={SEMI} fill="#1e2224" />
          ))}
          {Array.from({ length: 34 }, (_, i) => (
            <rect key={i} y={i * SEMI - SEMI / 2} width="100%" height="1" fill="#1b1e20" />
          ))}
          {Array.from({ length: 30 }, (_, i) => (
            <rect key={i} x={Math.round(4 + (i * ROLL_BAR) / 4)} width="1" height="179" fill={i % 4 === 1 ? "#44494b" : "#303537"} />
          ))}
          <rect x="423" width="12" height="179" fill="#000" opacity=".4" />
          {rollNotes.map(([x, w, k]) => (
            <rect key={`${x}-${k}`} x={x} y={k * SEMI - SEMI / 2} width={w} height={SEMI} fill="#9a5cc4" />
          ))}
          <rect x="430" y={14 * SEMI - SEMI / 2} width="3" height={SEMI} fill="#4f2272" />
          <rect x="430" y={26 * SEMI - SEMI / 2} width="3" height={SEMI} fill="#4f2272" />
          <rect x="370" width="1" height="179" fill="#c4c8ca" />
        </svg>
      </div>
      <div className="flex w-[10px] shrink-0 flex-col items-center justify-between bg-[#25292b] py-[2px] text-[#6d7275]">
        <Icon name="up" className="size-[6px]" />
        <i className="-mt-4 h-[41px] w-[3px] bg-[#797e81]" />
        <Icon name="down" className="size-[6px]" />
      </div>
    </div>
  );
}

function Editor() {
  return (
    <section aria-label="Editor" className="flex w-[615px] shrink-0 flex-col border-r border-[#16191a]">
      <PaneTitle>Editor</PaneTitle>
      <div className="flex h-[25px] shrink-0 border-t-2 border-b border-[#33383a] bg-[#5b6165]">
        <Tool icon="menu" label="Menu" className="mr-3 w-[23px]" />
        <Tool icon="pointer" label="Arrow tool" on />
        <Tool icon="brush" label="Paint tool" />
        <Tool icon="pencilLine" label="Line tool" />
        <Tool icon="eraser" label="Eraser tool" />
        <Tool icon="mute" label="Mute tool" />
        <Tool icon="speaker" label="Listen tool" />
        <i className="ml-2 w-[7px] border-l border-[#44494c]" />
        <Tool icon="wave" label="Curve" />
        <button type="button" className="w-[21px] shrink-0 text-[12px] text-[#e8eaeb]">Q</button>
        <Tool icon="stretch" label="Stretch" on />
        <button type="button" className="flex w-[45px] shrink-0 items-center justify-between pl-[5px] text-[8px] text-[#dcdfe0]">
          Action <Icon name="down" className="size-[6px]" />
        </button>
        <div className="ml-[10px] flex flex-1 gap-[2px] bg-[#484d50] pl-[2px]">
          <Picker label="Note Color" options={["Part"]} />
          <button type="button" className="w-[25px] text-[8px] text-[#c7cbcd]">AQ</button>
          <Picker label="Quantize" options={["1/32"]} />
          <Picker label="Timebase" options={["Bars"]} />
          <Picker label="Snap" options={["Quantize"]} />
        </div>
        <Tool icon="snap" label="Snap" on />
        <Tool icon="autoscroll" label="Autoscroll" />
        <Tool icon="split" label="Split view" />
      </div>
      <div className="flex h-[34px] shrink-0 border-b border-[#16191a] bg-[#43484b] py-px pl-[7px]">
        <div className="flex items-end gap-px">
          <MenuButton className="w-[64px]">Music Editing</MenuButton>
          <MenuButton className="w-[18px]" arrow={false}>
            <Icon name="gear" className="size-2" />
          </MenuButton>
        </div>
        <Group title="te" className="ml-[6px] -space-x-px">
          <MenuButton className="w-[21px]">el</MenuButton>
        </Group>
        <Group title="Pitch" className="ml-2">
          <MenuButton className="w-[53px]">Transpose</MenuButton>
          <MenuButton className="w-[36px]">Pitch</MenuButton>
          <MenuButton className="w-[43px]">Double</MenuButton>
        </Group>
        <Group title="Time & Velocity" className="ml-2">
          <MenuButton className="w-[35px]">Time</MenuButton>
          <MenuButton className="w-[41px]">Tempo</MenuButton>
          <MenuButton className="w-[42px]">Length</MenuButton>
          <MenuButton className="w-[33px]">Velo</MenuButton>
          <MenuButton className="w-[30px]" arrow={false}>
            <Icon name="figure" className="size-3" />
          </MenuButton>
          <MenuButton className="w-[29px]" arrow={false}>Mute</MenuButton>
        </Group>
        <Group title="Legato" className="ml-2">
          <MenuButton className="w-[40px]" arrow={false}>Leg+Ovlp</MenuButton>
          <MenuButton className="w-[36px]">more</MenuButton>
        </Group>
        <div className="ml-auto flex h-3 items-center gap-[7px] pr-[6px] text-[#d3d6d8]">
          <Icon name="undock" className="size-[7px]" />
          <Icon name="close" className="size-[7px]" />
        </div>
      </div>
      <div className="flex min-h-0 flex-1">
        <EditorInspector />
        <div className="flex min-w-0 flex-1 flex-col bg-[#25292b]">
          <div className="flex h-[21px] shrink-0 border-b border-black">
            <div className="flex w-[42px] shrink-0 items-center justify-around bg-[#1a1d1f] text-[#d3d6d8]">
              <Icon name="key" className="size-2" />
              <Icon name="drumkit" className="size-[10px] text-[#8b9093]" />
            </div>
            <div className="relative flex min-w-0 flex-1 overflow-hidden border-t-4 border-[#3a3f42] pl-[19px]">
              <i className="absolute -top-1 left-0 h-5 w-[192px] border-t-4 border-[#6d7275] bg-[#8a94a8]/20" />
              {[56, 57, 58, 59, 60, 61, 62, 63].map((b) => (
                <div key={b} className="flex shrink-0 flex-col justify-between" style={{ width: ROLL_BAR }}>
                  <span className="text-[8px] leading-[9px] text-[#c3c7c9]">{b}</span>
                  <span className="flex h-[6px] items-end">
                    <i className="h-full w-1/4 border-l border-[#a9adaf]" />
                    <i className="h-[3px] w-1/4 border-l border-[#a9adaf]" />
                    <i className="h-[3px] w-1/4 border-l border-[#a9adaf]" />
                    <i className="h-[3px] w-1/4 border-l border-[#a9adaf]" />
                  </span>
                </div>
              ))}
            </div>
          </div>
          <PianoRoll />
          <div className="flex h-[11px] shrink-0 items-center border-t border-black pl-[46px] text-[7px] text-[#b9bdbf]">
            <span className="w-[9px]">...</span>
            <button type="button" className="h-full w-[38px] bg-[#3287bd] text-white">Velocity</button>
            <button type="button" className="w-[50px]">Modulation</button>
            <button type="button" className="w-[47px]">Pitch Bend</button>
            <button type="button" className="w-[51px]">After Touch</button>
            <Icon name="close" className="mr-[3px] ml-auto size-[5px]" />
          </div>
          <div className="flex h-[11px] shrink-0 items-center gap-[7px] pl-[2px] text-[#c9cdcf]">
            <Icon name="zigzag" className="size-2" />
            <Icon name="plus" className="size-[6px]" />
            <Icon name="minus" className="size-[6px]" />
            <Icon name="left" className="ml-1 size-[6px] text-[#6d7275]" />
            <i className="ml-[99px] h-[3px] w-[14px] bg-[#6d7275]" />
            <Icon name="right" className="ml-auto size-[6px] text-[#83888a]" />
            <ZoomSlider label="Editor zoom" value={25} />
            <Icon name="size" className="mr-[10px] size-[9px] text-[#6d7275]" />
          </div>
        </div>
      </div>
    </section>
  );
}

function Channel({ c, first }: { c: (typeof channels)[number]; first: boolean }) {
  const [n, name, hue, db, fader, left, right] = c;
  const h = hues[hue];
  const selected = n === 12;
  const desk = selected ? "bg-[#6a2c9d]" : h.desk;
  return (
    <li className={clsx("flex overflow-hidden", first ? "w-[14px] shrink-0 justify-end" : "min-w-0 flex-1")}>
      <div className={clsx("flex shrink-0 flex-col overflow-hidden border-r border-[#101314]", first ? "w-[23px]" : "w-full")}>
        <i className={clsx("h-[2px]", h.strip)} />
        <button type="button" className={clsx("h-[13px] border-b border-black text-[8px] text-[#c3c7c9]", selected ? "bg-[#36214b]" : "bg-[#212527]")}>M</button>
        <button type="button" className={clsx("h-[13px] border-b border-black text-[8px] text-[#c3c7c9]", selected ? "bg-[#36214b]" : "bg-[#212527]")}>S</button>
        <span className="flex h-3 justify-center bg-[#1d2123] pt-px">
          <i className="w-[2px] bg-[#3d9dd4]" />
        </span>
        <div className={clsx("relative h-[193px]", desk)}>
          <span className="block pt-[2px] text-center text-[8px] leading-[10px] text-[#dde0e1]">{db}</span>
          <div className="absolute top-[14px] bottom-0 left-0 w-[7px] bg-[#252a2c]">
            <i className={clsx("block h-[7px] opacity-60", h.strip, "brightness-50")} />
          </div>
          <div className="absolute bottom-0 left-0 flex items-end gap-px">
            <i className="w-[3px] bg-[#4394b0]" style={{ height: left }} />
            <i className="w-[3px] bg-[#4394b0]" style={{ height: right }} />
          </div>
          <div className="absolute inset-x-0 top-[41px] bottom-3 flex flex-col justify-between">
            {[0, 1, 2, 3, 4, 5, 6].map((i) => (
              <i key={i} className={clsx("h-px border-t border-dashed", i === 1 ? "border-[#b9c3a8]/80" : "border-white/15")} />
            ))}
          </div>
          <i className="absolute bottom-0 left-[9px] w-[9px] bg-white/20" style={{ height: fader }} />
          <i className="absolute top-6 bottom-3 left-[13px] w-px bg-black/70" />
          <input
            type="range"
            aria-label={`${name} level`}
            min={0}
            max={175}
            defaultValue={fader}
            className="absolute top-0 left-[9px] h-[193px] w-[9px] appearance-none bg-transparent [direction:rtl] [writing-mode:vertical-lr] [&::-webkit-slider-thumb]:h-[18px] [&::-webkit-slider-thumb]:w-[9px] [&::-webkit-slider-thumb]:appearance-none [&::-webkit-slider-thumb]:rounded-[1px] [&::-webkit-slider-thumb]:bg-[linear-gradient(#fff_0_10%,#b8b8b8_10%_20%,#e8e8e8_20%_46%,#555_46%_52%,#f0f0f0_52%_82%,#a5a5a5_82%_90%,#ddd_90%)]"
          />
        </div>
        <div className={clsx("flex h-[11px] items-center justify-center gap-1 text-[7px] font-bold text-[#cfd3d5]", desk)}>
          {n}
          <Icon name="keys" className="size-[7px]" />
        </div>
        <button type="button" className={clsx("flex h-[13px] items-center justify-center overflow-hidden text-[6px] whitespace-nowrap text-[#9ca2a4]", desk)}>
          <span className="bg-black/35">Aut:Off</span>
        </button>
        <i className={clsx("h-[3px]", desk)} />
        <span className={clsx("h-[10px] overflow-hidden pl-px text-[7px] leading-[10px] whitespace-nowrap", h.label)}>{name}</span>
      </div>
    </li>
  );
}

function MainChannel() {
  const scale: [string, number][] = [["6", 4], ["0", 14], ["-3", 20], ["-6", 26], ["-9", 32], ["-12", 38], ["-24", 62], ["-36", 85], ["-48", 109], ["-60", 131]];
  return (
    <div className="flex w-[55px] shrink-0 flex-col bg-[#431023] text-[8px] text-[#c6bcc0]">
      <i className="h-[2px] bg-[#e30b5c]" />
      <button type="button" className="mx-[3px] mt-4 h-3 bg-[#5b3343] text-[8px]">Speak..u1+2</button>
      <p className="flex justify-around pt-[3px] text-[6px] leading-[8px] text-[#5a8c8c]">
        <span>-0.10</span>
        <span>-0.10</span>
      </p>
      <p className="flex justify-around leading-[14px] text-[#ecdfe3]">
        <span>0dB</span>
        <span className="text-[#7d5563]">0</span>
      </p>
      <div className="mx-1 mt-px flex h-3 gap-px">
        <button type="button" className="flex-1 bg-[#371521]">M</button>
        <button type="button" className="flex-1 bg-[#371521]">S</button>
      </div>
      <div className="mx-1 mt-px flex h-[13px] items-center gap-[5px] bg-[#371521]">
        <button type="button" aria-label="Metronome" className="flex h-full w-4 items-center justify-center bg-[#4b93ad] text-white">
          <Icon name="metronome" className="size-2" />
        </button>
        <Icon name="fader" className="size-2" />
        <Icon name="link" className="size-[10px]" />
      </div>
      <div className="flex h-[155px] pt-3">
        <div className="flex w-5 flex-col items-center">
          <Icon name="stack" className="-mt-[6px] size-2 text-[#5aa9c4]" />
          <Icon name="mono" className="mt-[104px] size-2" />
          <Icon name="knob" className="mt-[9px] size-2" />
        </div>
        <div className="relative w-[11px]">
          <i className="absolute bottom-[10px] left-px h-[82px] w-[9px] bg-white/20" />
          <i className="absolute top-3 bottom-5 left-[5px] w-px bg-black" />
          <input
            type="range"
            aria-label="Main level"
            defaultValue={81}
            className="absolute inset-0 h-full w-[11px] appearance-none bg-transparent [direction:rtl] [writing-mode:vertical-lr] [&::-webkit-slider-thumb]:h-6 [&::-webkit-slider-thumb]:w-[11px] [&::-webkit-slider-thumb]:appearance-none [&::-webkit-slider-thumb]:bg-[linear-gradient(#7cc4da_0_8%,#3f8ba5_8%_14%,#5aa9c4_14%_48%,#1d4f60_48%_54%,#5aa9c4_54%_82%,#2f6f86_82%)]"
          />
        </div>
        <svg viewBox="0 0 24 143" className="h-[143px] w-6" aria-label="Main meter">
          <rect x="4" y="2" width="7" height="131" fill="#27202a" />
          <rect x="4" y="14" width="3" height="119" fill="#4394b0" />
          <rect x="8" y="14" width="3" height="119" fill="#4394b0" />
          <rect x="4" y="25" width="7" height="1" fill="#fff" />
          {scale.map(([label, y]) => (
            <text key={label} x="22" y={y + 2} textAnchor="end" fontSize="5" fontWeight="bold" fill="#d9cdd1" fontFamily="Liberation Sans, sans-serif">
              {label}
            </text>
          ))}
        </svg>
      </div>
      <Icon name="sigma" className="mx-auto -mt-[3px] size-[9px]" />
      <button type="button" className="mx-1 mt-1 h-[10px] bg-[#2a0b16] text-[7px] text-[#94828a]">Auto: Off</button>
      <span className="mt-auto h-[10px] bg-[#f0085f] text-center text-[7px] leading-[10px] text-white">Main</span>
      <i className="h-[11px] bg-[#25292b]" />
    </div>
  );
}

function Console() {
  return (
    <section aria-label="Console" className="flex min-w-0 flex-1 flex-col bg-[#25292b]">
      <PaneTitle>Console</PaneTitle>
      <div className="flex min-h-0 flex-1">
        <div className="flex w-[39px] shrink-0 flex-col gap-px pt-px pr-[2px] pl-px text-[8px] text-[#c3c7c9]">
          <button type="button" className="flex h-[15px] shrink-0 items-center justify-between bg-[#363b3e] pr-[2px] pl-[7px]">
            I/O <Icon name="down" className="size-[5px]" />
          </button>
          <button type="button" aria-label="Options" className="flex h-[15px] shrink-0 items-center justify-center bg-[#363b3e]">
            <Icon name="wrench" className="size-2" />
          </button>
          <div className="flex-1 bg-[#202426]" />
          {["upDown", "leftRight"].map((n) => (
            <button key={n} type="button" aria-label={n} className="flex h-[18px] shrink-0 items-center justify-center bg-[#363b3e]">
              <Icon name={n} className="size-[11px]" />
            </button>
          ))}
          {["Inputs", "Outputs", "External", "Instr."].map((n) => (
            <button key={n} type="button" className="h-[15px] shrink-0 bg-[#363b3e]">{n}</button>
          ))}
          {["bars", "menu"].map((n) => (
            <button key={n} type="button" aria-label={n} className="flex h-[15px] shrink-0 items-center justify-center bg-[#363b3e] last:mb-[11px]">
              <Icon name={n} className="size-[10px] text-[#9ba0a3]" />
            </button>
          ))}
        </div>
        <div className="flex min-w-0 flex-1 flex-col">
          <ul className="flex min-h-0 flex-1">
            {channels.map((c, i) => (
              <Channel key={c[0]} c={c} first={i === 0} />
            ))}
          </ul>
          <div className="flex h-[11px] shrink-0 items-center justify-between px-1 pt-[3px] text-[#83888a]">
            <Icon name="left" className="size-[5px]" />
            <i className="mr-[5px] ml-[34px] h-[3px] flex-1 bg-[#606568]" />
            <Icon name="right" className="size-[5px]" />
          </div>
        </div>
        <MainChannel />
      </div>
    </section>
  );
}

function Readout({ value, label, className }: { value: ReactNode; label: ReactNode; className?: string }) {
  return (
    <div className={clsx("flex shrink-0 flex-col justify-center text-center text-[9px] leading-[11px] whitespace-nowrap text-[#d3d6d8]", className)}>
      <span className="flex h-[11px] items-center justify-center">{value}</span>
      <span className="text-[7px] leading-[9px] text-[#84888b]">{label}</span>
    </div>
  );
}

function Transport() {
  const buttons: [string, string, string][] = [
    ["left", "Previous", "size-[9px]"], ["rewind", "Rewind", "size-3"], ["forward", "Forward", "size-3"], ["right", "Next", "size-[9px]"], ["toStart", "Return to zero", "size-[11px]"],
  ];
  return (
    <footer className="flex h-[35px] shrink-0 border-t border-b-4 border-[#454b4f] bg-[#60676b]">
      <div className="ml-[69px] flex w-[948px] items-center bg-[#111415] [clip-path:polygon(0_0,100%_0,calc(100%_-_9px)_100%,7px_100%)]">
        <Readout className="w-14" value={<Icon name="midi" className="size-4 text-[#5d6265]" />} label="MIDI" />
        <Readout
          className="-ml-2 w-[41px]"
          value={
            <span className="flex w-full flex-col gap-[2px]">
              <i className="h-1 w-full bg-[linear-gradient(to_right,#5aa9c4_20%,#2b3135_20%)]" />
              <i className="h-1 w-full bg-[#2b3135]" />
            </span>
          }
          label="Performance"
        />
        <svg viewBox="0 0 16 16" className="mx-[10px] size-4 shrink-0" aria-hidden="true">
          <circle cx="8" cy="8" r="7" fill="none" stroke="#c3c7c9" strokeWidth="1.500" strokeDasharray="1 2.660" />
        </svg>
        <div className="w-[38px] shrink-0 text-[9px] leading-[11px] whitespace-nowrap text-[#d3d6d8]">
          44.1 kHz
          <p className="text-[8px] leading-[9px]">104.7 ms</p>
        </div>
        <Readout className="ml-1 w-[50px]" value="11:20 days" label="Record Max" />
        <Readout className="ml-[10px] w-[56px]" value="00:02:02.156" label="Seconds" />
        <Readout className="ml-[15px] w-[94px]" value={<b className="text-[13px] font-normal text-white">00062.01.02.25</b>} label="Bars" />
        <div className="ml-3 flex shrink-0 items-center gap-[6px] text-[#c3c7c9]">
          {buttons.map(([icon, label, size]) => (
            <button key={icon} type="button" aria-label={label}>
              <Icon name={icon} className={size} />
            </button>
          ))}
        </div>
        <div className="ml-[14px] flex shrink-0 items-center gap-[9px] text-[#c9cdcf]">
          <button type="button" aria-label="Stop"><Icon name="stop" className="size-[14px]" /></button>
          <button type="button" aria-label="Play"><Icon name="play" className="size-[14px] text-[#6cf03c]" /></button>
          <button type="button" aria-label="Record"><Icon name="circle" className="size-[15px]" /></button>
          <button type="button" aria-label="Loop"><Icon name="loop" className="size-5" /></button>
        </div>
        <dl className="ml-3 grid shrink-0 grid-cols-[10px_auto] text-[9px] leading-[10px] text-[#d3d6d8]">
          <dt className="text-[#4394b0]">L</dt>
          <dd>00048.01.01.00</dd>
          <dt className="text-[#4394b0]">R</dt>
          <dd>00059.01.01.00</dd>
        </dl>
        <div className="ml-[14px] grid shrink-0 grid-cols-2 gap-x-[7px] gap-y-1 text-[#b3b7b9]">
          {["fade", "punch", "gear", "squeeze"].map((n) => (
            <Icon key={n} name={n} className="size-[9px]" />
          ))}
        </div>
        <Readout
          className="ml-[6px] w-[44px]"
          value={
            <span className="flex gap-[5px] text-[#9ba0a3]">
              <Icon name="circle" className="size-2" />
              <Icon name="wrench" className="size-2" />
              <Icon name="metronome" className="size-2" />
            </span>
          }
          label="Metronome"
        />
        <Readout className="ml-1 w-[34px]" value="4 / 4" label="Timing" />
        <Readout className="w-[25px]" value="-" label="Key" />
        <Readout className="ml-[2px] w-[36px]" value="120.00" label="Tempo" />
        <div className="ml-[6px] flex w-[62px] shrink-0 flex-col gap-[5px]">
          <i className="h-[6px] w-[45px] bg-[linear-gradient(to_right,#5aa9c4_88%,#2b3135_88%)]" />
          <span className="flex items-center gap-[5px]">
            <i className="h-[6px] w-[45px] bg-[linear-gradient(to_right,#35687a_74%,#fff_74%_77%,#23282b_77%)]" />
            <Icon name="link" className="size-[11px] text-[#5fb8d2]" />
          </span>
        </div>
      </div>
      <nav className="ml-auto flex text-[8px] text-[#e6e9ea]">
        <button type="button" className="w-[37px] border-r border-[#60676b] bg-[#3a98d2]">Edit</button>
        <button type="button" className="w-[37px] bg-[#3a98d2]">Mix</button>
        <button type="button" className="w-[43px]">Browse</button>
      </nav>
    </footer>
  );
}

function MeterWindow() {
  const scale: [string, number][] = [
    ["20", 15], ["16", 53], ["12", 95], ["8", 136], ["4", 178], ["0", 220], ["-4", 262], ["-8", 304], ["-12", 345],
    ["-16", 387], ["-20", 429], ["-24", 470], ["-30", 533], ["-40", 634],
  ];
  return (
    <aside className="flex w-20 shrink-0 flex-col overflow-hidden border-l border-[#2a2f31] bg-[#4e575c] text-[8px] text-[#c3c7c9]">
      <div className="flex h-[13px] shrink-0 items-center gap-1 bg-[#3a4044] pl-1 whitespace-nowrap">
        <Icon name="down" className="size-[6px]" />
        <Icon name="plus" className="size-[6px]" />
        <span className="pl-[2px]">Main - Post Fad</span>
      </div>
      <div className="flex h-4 shrink-0 items-center gap-[7px] bg-[#222628] pl-1">
        <Icon name="knob" className="size-[9px]" />
        <Icon name="routing" className="size-[11px]" />
        <i className="h-full w-1 bg-[#3a4044]" />
        <Icon name="faderDot" className="size-[9px]" />
        <Icon name="dotFader" className="size-[9px] text-white" />
      </div>
      <div className="flex h-[13px] shrink-0 items-center bg-[#3a4044] pt-px">
        <button type="button" aria-label="Power" className="flex h-[11px] w-4 items-center justify-center bg-[#3a98d2] text-white">
          <Icon name="power" className="size-2" />
        </button>
        <span className="flex h-[11px] w-5 items-center justify-center bg-[#2b3033]">
          <Icon name="bypass" className="size-[10px]" />
        </span>
        <Icon name="doc" className="ml-[3px] size-[10px]" />
        <Icon name="left" className="ml-[6px] size-[6px]" />
        <Icon name="right" className="ml-1 size-[6px]" />
      </div>
      <div className="flex h-[11px] shrink-0 items-center bg-[#33393c] pl-[3px] text-[7px] text-[#8b9093]">
        Auto: Off <span className="ml-[14px] text-[#5a6063]">Compare</span>
      </div>
      <div className="mt-[5px] mb-[7px] ml-1 min-h-0 flex-1 border border-[#20262a] bg-[#04181b]">
        <svg viewBox="0 0 74 653" className="w-full" aria-label="Level meter">
          {Array.from({ length: 6 }, (_, i) => (
            <rect key={i} x="8" y={10 + i * 10.4} width="46" height="1" fill="#1c3a3d" />
          ))}
          <rect x="8" y="64" width="21" height="113" fill="#cd262c" />
          <rect x="33" y="66" width="21" height="111" fill="#cd262c" />
          {[8, 33].map((x) => (
            <g key={x}>
              <rect x={x} y="176" width="21" height="42" fill="#d3cb3f" />
              <rect x={x} y="218" width="21" height="422" fill="#54b93b" />
            </g>
          ))}
          {Array.from({ length: 54 }, (_, i) => (
            <rect key={i} x="8" y={74 + i * 10.4} width="46" height="1" fill="#000" opacity=".06" />
          ))}
          {scale.map(([label, y]) => (
            <g key={label}>
              <rect x="8" y={y} width="46" height="1" fill="#000" opacity=".18" />
              <text x="70" y={y + 3} textAnchor="end" fontSize="8" fill="#8fa0a5" fontFamily="Liberation Sans, sans-serif">
                {label}
              </text>
            </g>
          ))}
          <rect x="11" y="643" width="42" height="5" fill="#1f2a2e" />
          <rect x="31" y="643" width="14" height="5" fill="#4fa6d0" />
          <text x="57" y="648" fontSize="6" fill="#7a8a8f" fontFamily="Liberation Sans, sans-serif">0.55</text>
        </svg>
      </div>
    </aside>
  );
}

export default function App() {
  return (
    <div className="flex h-screen overflow-hidden bg-[#3a4043] font-['Liberation_Sans',Arial,sans-serif]">
      <main className="flex min-w-0 flex-1 flex-col">
        <TitleBar />
        <MainToolbar />
        <Arrangement />
        <div className="flex h-[294px] shrink-0">
          <Editor />
          <Console />
        </div>
        <div className="flex h-[10px] shrink-0 items-center border-b border-l-2 border-[#3d7684] bg-[#25292b] text-[7px] text-[#c3c7c9]">
          <button type="button" className="w-8">M</button>
          <button type="button" className="w-[34px]">S</button>
          <button type="button" aria-label="Automation" className="flex w-[30px] justify-center text-[#3a98d2]">
            <Icon name="power" className="size-[7px]" />
          </button>
          <label className="relative flex w-[62px] items-center">
            <select aria-label="Track height" className="w-full appearance-none bg-transparent pl-[18px] text-[7px] leading-[8px]">
              <option>Tiny</option>
            </select>
            <Icon name="down" className="absolute right-1 size-[5px] text-[#83888a]" />
          </label>
          <Icon name="menu" className="size-[6px] text-[#83888a]" />
          <Icon name="left" className="ml-2 size-[6px] text-[#83888a]" />
          <span className="mx-[6px] flex flex-1">
            <i className="h-[3px] w-[89%] bg-[#797e81]" />
          </span>
          <Icon name="right" className="mr-[5px] size-[6px] text-[#83888a]" />
          <ZoomSlider label="Timeline zoom" value={3} />
          <Icon name="size" className="mr-1 ml-[5px] size-2 text-[#6d7275]" />
        </div>
        <Transport />
      </main>
      <MeterWindow />
    </div>
  );
}
